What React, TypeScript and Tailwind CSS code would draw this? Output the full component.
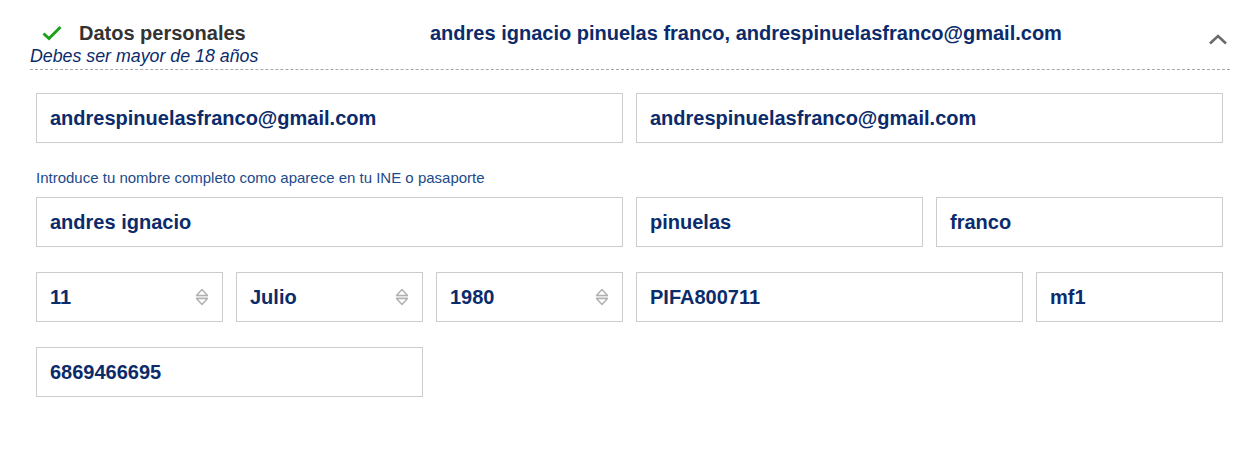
import React from "react";

const Spinner = () => (
  <svg width="14" height="22" viewBox="0 0 14 22" className="shrink-0">
    <path d="M1.5 9.5 L7 3.5 L12.5 9.5 Z" fill="none" stroke="#b0b0b0" strokeWidth="1.4" strokeLinejoin="round" />
    <line x1="1" y1="11" x2="13" y2="11" stroke="#dadada" strokeWidth="1" />
    <path d="M1.5 12.5 L7 18.5 L12.5 12.5 Z" fill="none" stroke="#b0b0b0" strokeWidth="1.4" strokeLinejoin="round" />
  </svg>
);

const Field = ({ value, span, select }: { value: string; span: string; select?: boolean }) => (
  <div
    className={`${span} h-[50px] border border-[#cccccc] bg-white flex items-center justify-between pl-[13px] pr-[13px] text-[20px] font-bold text-[#0b2b6b]`}
  >
    <span>{value}</span>
    {select && <Spinner />}
  </div>
);

export default function App() {
  return (
    <div className="w-[1252px] h-[464px] bg-white" style={{ fontFamily: '"Liberation Sans", Arial, sans-serif' }}>
      <div className="ml-[30px] w-[1200px] pt-[20px] border-b border-dashed border-[#a8a8a8] pb-[3px]">
        <div className="flex items-start">
          <div className="w-[400px] shrink-0">
            <div className="flex items-center h-[26px]">
              <svg width="20" height="16" viewBox="0 0 20 16" className="ml-[12px]">
                <path d="M1.5 8.5 L7 13.5 L18.5 2" fill="none" stroke="#1aa31a" strokeWidth="3" />
              </svg>
              <span className="ml-[17px] text-[20px] font-bold text-[#333333]">Datos personales</span>
            </div>
            <div className="italic text-[17.8px] text-[#0b2b6b] leading-[20px]">Debes ser mayor de 18 años</div>
          </div>
          <div className="h-[26px] flex items-center text-[20px] font-bold text-[#0b2b6b]">
            andres ignacio pinuelas franco, andrespinuelasfranco@gmail.com
          </div>
          <div className="ml-auto mr-[2px] mt-[13px]">
            <svg width="20" height="12" viewBox="0 0 20 12">
              <path d="M2 10.5 L10 3 L18 10.5" fill="none" stroke="#6b6b6b" strokeWidth="2.6" />
            </svg>
          </div>
        </div>
      </div>

      <div className="ml-[36px] w-[1187px] mt-[23px] grid grid-cols-12 gap-x-[13px]">
        <Field span="col-span-6" value="andrespinuelasfranco@gmail.com" />
        <Field span="col-span-6" value="andrespinuelasfranco@gmail.com" />

        <div className="col-span-12 h-[54px] flex items-center pt-[16px] text-[15px] text-[#1d4a8a]">
          Introduce tu nombre completo como aparece en tu INE o pasaporte
        </div>

        <Field span="col-span-6" value="andres ignacio" />
        <Field span="col-span-3" value="pinuelas" />
        <Field span="col-span-3" value="franco" />

        <div className="col-span-12 h-[25px]" />

        <Field span="col-span-2" value="11" select />
        <Field span="col-span-2" value="Julio" select />
        <Field span="col-span-2" value="1980" select />
        <Field span="col-span-4" value="PIFA800711" />
        <Field span="col-span-2" value="mf1" />

        <div className="col-span-12 h-[25px]" />

        <Field span="col-span-4" value="6869466695" />
      </div>
    </div>
  );
}
